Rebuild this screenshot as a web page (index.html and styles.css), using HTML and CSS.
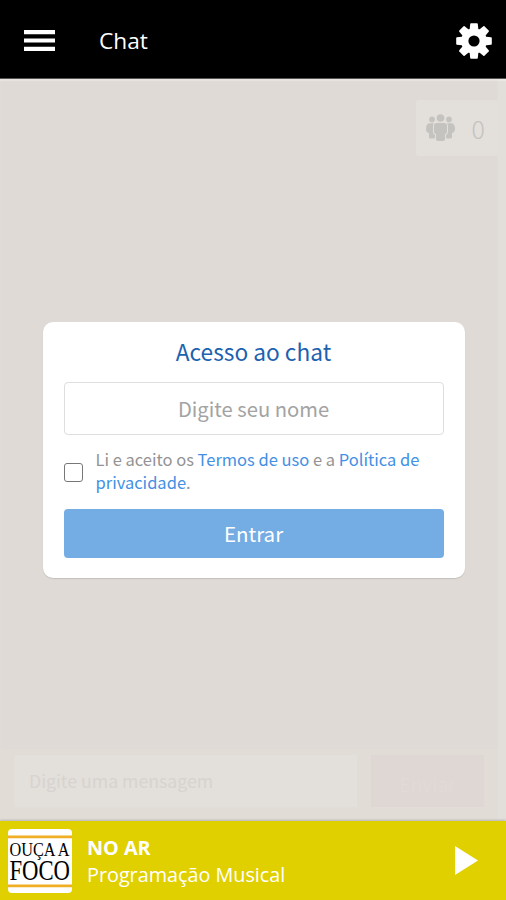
FILE: index.html
```html
<!DOCTYPE html>
<html lang="pt-BR">
<head>
<meta charset="utf-8">
<title>Chat</title>
<link rel="stylesheet" href="styles.css">
</head>
<body>
<header class="topbar">
  <svg class="menu" viewBox="0 0 31 21"><path d="M0 0h31v4.3H0zM0 8.4h31v4.2H0zM0 16.7h31V21H0z"/></svg>
  <h1 class="title">Chat</h1>
  <svg class="gear" viewBox="0 0 36 36"><g><circle cx="18" cy="18" r="12.8"/><path id="tooth" d="M13.500 8 14.200 1Q14.300.2 15 .2h6q.7 0 .8.8L22.500 8z"/><use href="#tooth" transform="rotate(45 18 18)"/><use href="#tooth" transform="rotate(90 18 18)"/><use href="#tooth" transform="rotate(135 18 18)"/><use href="#tooth" transform="rotate(180 18 18)"/><use href="#tooth" transform="rotate(225 18 18)"/><use href="#tooth" transform="rotate(270 18 18)"/><use href="#tooth" transform="rotate(315 18 18)"/></g><circle class="hole" cx="18" cy="18" r="5.6"/></svg>
</header>
<main class="chat">
  <div class="room">
    <div class="users">
      <svg class="people" viewBox="0 0 29 28"><circle cx="14.5" cy="4" r="3.8"/><circle cx="6" cy="5.4" r="2.8"/><circle cx="23" cy="5.4" r="2.8"/><path d="M11 9h7q3 0 3 3v6q0 2-2 2v5q0 2-2 2h-5q-2 0-2-2v-5q-2 0-2-2v-6q0-3 3-3zM4 9.3h4Q7 10.500 7 12v6q0 2 2 3v2q0 1.500-1.500 1.500h-3Q3 24.500 3 23v-4q-3-1-3-4 0-5.700 4-5.700zM25 9.300h-4q1 1.200 1 2.700v6q0 2-2 3v2q0 1.500 1.500 1.500h3Q26 24.500 26 23v-4q3-1 3-4 0-5.700-4-5.700z"/></svg>
      <span class="count">0</span>
    </div>
    <section class="card">
      <h2 class="heading">Acesso ao chat</h2>
      <div class="field">Digite seu nome</div>
      <div class="terms">
        <span class="check"></span>
        <p class="legal"><span class="line">Li e aceito os <a>Termos de uso</a> e a <a>Política de</a></span><span class="line"><a>privacidade</a>.</span></p>
      </div>
      <div class="enter">Entrar</div>
    </section>
    <div class="composer">
      <div class="message">Digite uma mensagem</div>
      <div class="send">Enviar</div>
    </div>
  </div>
</main>
<footer class="player">
  <svg class="logo" viewBox="0 0 64 64"><rect class="paper" width="64" height="64" rx="4"/><path class="stripe" d="M0 6.500h64v2.800H0zM0 55.500h64v2.800H0z"/><text x="1.500" y="27" font-size="19" textLength="60" lengthAdjust="spacingAndGlyphs">OUÇA A</text><text x="1.500" y="50.500" font-size="29" textLength="60.500" lengthAdjust="spacingAndGlyphs">FOCO</text></svg>
  <div class="track">
    <strong class="live">NO AR</strong>
    <span class="show">Programação Musical</span>
  </div>
  <svg class="play" viewBox="0 0 23 29"><path d="M0 0 23 14.500 0 29z"/></svg>
</footer>
</body>
</html>
```
FILE: styles.css
```css
* { box-sizing: border-box; }
body {
  margin: 0;
  width: 506px;
  height: 900px;
  display: flex;
  flex-direction: column;
  overflow: hidden;
  font-family: "Open Sans", sans-serif;
}
.topbar {
  height: 79px;
  flex: none;
  display: flex;
  align-items: center;
  padding: 3px 14px 0 24px;
  background: #000;
  border-bottom: 1px solid #555;
}
.menu { width: 31px; height: 21px; fill: #fff; }
.title {
  margin: 0 auto 0 44px;
  color: #fff;
  font-size: 22.700px;
  font-weight: 400;
  line-height: 32px;
}
.gear { width: 36px; height: 36px; fill: #fff; }
.hole { fill: #000; }
.chat {
  flex: 1;
  display: flex;
  padding-right: 8px;
  background: #e2deda;
  box-shadow: inset 0 2px 1px #ebe8e5;
  font-family: "Noto Sans CJK SC", sans-serif;
}
.room {
  width: 498px;
  display: flex;
  flex-direction: column;
  background: #dfdad5;
  box-shadow: inset 0 2px 1px #e8e4e0;
}
.users {
  align-self: flex-end;
  width: 82px;
  height: 56px;
  margin-top: 21px;
  display: flex;
  align-items: center;
  justify-content: space-between;
  padding: 0 13px 0 10px;
  border-radius: 3px;
  background: #e3dfdb;
}
.people { width: 29px; height: 28px; fill: #c5c3bf; }
.count { color: #c5c3bf; font-size: 25px; font-weight: 300; line-height: 30px; }
.card {
  width: 422px;
  height: 256px;
  margin: 166px 0 0 42.500px;
  padding: 15px 21px 20px;
  border-radius: 10px;
  background: #fff;
  box-shadow: 0 1px 1px #c4c0bc;
}
.heading {
  margin: 0;
  height: 30px;
  color: #1d62af;
  font-size: 22.700px;
  font-weight: 400;
  line-height: 30px;
  text-align: center;
  white-space: nowrap;
}
.field {
  height: 53px;
  margin-top: 15px;
  border: 1px solid #dedede;
  border-radius: 4px;
  color: #a3a3a3;
  font-size: 20.200px;
  line-height: 51px;
  text-align: center;
}
.terms { height: 74px; display: flex; align-items: center; gap: 13px; }
.check { width: 19px; height: 19px; flex: none; border: 1px solid #777; border-radius: 3px; }
.legal {
  margin: 0 0 2px;
  color: #939393;
  font-size: 16.500px;
  line-height: 23px;
  white-space: nowrap;
}
.legal a { color: #4390e4; }
.line { display: block; }
.enter {
  height: 49px;
  border-radius: 4px;
  background: #74ade4;
  color: #fff;
  font-size: 20.500px;
  line-height: 49px;
  text-align: center;
}
.composer {
  height: 72px;
  margin-top: auto;
  display: flex;
  gap: 14px;
  padding: 6px 14px 14px;
  background: #e1dcd6;
}
.message {
  width: 343px;
  padding-left: 15px;
  background: #e3dfdb;
  color: #d7d3cf;
  font-size: 17.700px;
  line-height: 51px;
}
.send {
  width: 113px;
  background: #dfd7d3;
  color: #e1dad6;
  font-size: 19px;
  line-height: 57px;
  text-align: center;
}
.player {
  height: 79px;
  flex: none;
  display: flex;
  align-items: center;
  padding: 0 28px 0 8px;
  background: #e1d000;
  box-shadow: 0 -1px 2px #b8b6b5;
  position: relative;
}
.logo { width: 64px; height: 64px; overflow: visible; font-family: "Liberation Serif", serif; }
.paper { fill: #fff; }
.stripe { fill: #efae24; }
.track {
  margin: 0 auto 0 15px;
  display: flex;
  flex-direction: column;
  color: #fff;
  font-size: 19.800px;
  line-height: 27px;
}
.live { font-weight: 700; }
.play { width: 23px; height: 29px; fill: #fff; }
```
